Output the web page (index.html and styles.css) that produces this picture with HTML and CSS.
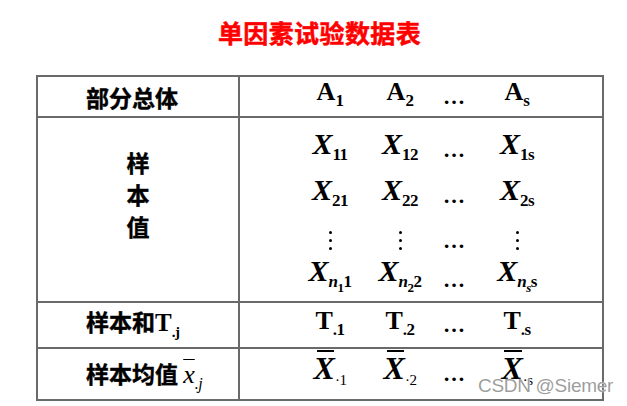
FILE: index.html
```html
<!DOCTYPE html>
<html lang="zh">
<head>
<meta charset="utf-8">
<title>单因素试验数据表</title>
<link rel="stylesheet" href="styles.css">
</head>
<body>
<div class="page">
  <h1 class="title">单因素试验数据表</h1>
  <table class="data">
    <tr class="r-head">
      <th class="lab">部分总体</th>
      <td class="vals">
        <div class="grid one">
          <span class="m">A<span class="sb">1</span></span>
          <span class="m">A<span class="sb">2</span></span>
          <span class="m dots">…</span>
          <span class="m">A<span class="sb it">s</span></span>
        </div>
      </td>
    </tr>
    <tr class="r-sample">
      <th class="lab center">
        <div class="vert"><span>样</span><span>本</span><span>值</span></div>
      </th>
      <td class="vals">
        <div class="grid four">
          <span class="m"><span class="x">X</span><span class="sb">11</span></span>
          <span class="m"><span class="x">X</span><span class="sb">12</span></span>
          <span class="m dots">…</span>
          <span class="m"><span class="x">X</span><span class="sb">1s</span></span>

          <span class="m"><span class="x">X</span><span class="sb">21</span></span>
          <span class="m"><span class="x">X</span><span class="sb">22</span></span>
          <span class="m dots">…</span>
          <span class="m"><span class="x">X</span><span class="sb">2s</span></span>

          <span class="vd"><i></i><i></i><i></i></span>
          <span class="vd"><i></i><i></i><i></i></span>
          <span class="m dots">…</span>
          <span class="vd"><i></i><i></i><i></i></span>

          <span class="m"><span class="x">X</span><span class="sb"><span class="it">n</span><span class="ssb">1</span>1</span></span>
          <span class="m"><span class="x">X</span><span class="sb"><span class="it">n</span><span class="ssb">2</span>2</span></span>
          <span class="m dots">…</span>
          <span class="m"><span class="x">X</span><span class="sb"><span class="it">n</span><span class="ssb it">s</span>s</span></span>
        </div>
      </td>
    </tr>
    <tr class="r-sum">
      <th class="lab">样本和<span class="m t">T<span class="sb">.j</span></span></th>
      <td class="vals">
        <div class="grid one">
          <span class="m">T<span class="sb">.1</span></span>
          <span class="m">T<span class="sb">.2</span></span>
          <span class="m dots">…</span>
          <span class="m">T<span class="sb">.s</span></span>
        </div>
      </td>
    </tr>
    <tr class="r-mean">
      <th class="lab">样本均值 <span class="xbar"><span class="ov">x</span><span class="sb">.j</span></span></th>
      <td class="vals">
        <div class="grid one">
          <span class="m big"><span class="x bar">X</span><span class="sb thin">·1</span></span>
          <span class="m big"><span class="x bar">X</span><span class="sb thin">·2</span></span>
          <span class="m dots">…</span>
          <span class="m big"><span class="x bar">X</span><span class="sb thin">·s</span></span>
        </div>
      </td>
    </tr>
  </table>
  <div class="wm">CSDN @Siemer</div>
</div>
</body>
</html>
```

FILE: styles.css
```css
html, body {
  margin: 0;
  padding: 0;
  background: #ffffff;
}

.page {
  position: relative;
  width: 627px;
  height: 406px;
  overflow: hidden;
  font-family: "Noto Sans CJK SC", "Noto Sans", sans-serif;
  color: #000;
}

.title {
  margin: 0;
  box-sizing: border-box;
  height: 75px;
  padding: 14px 0 0 12px;
  line-height: 36px;
  text-align: center;
  font-size: 25px;
  font-weight: 700;
  color: #ff0000;
  letter-spacing: 0.4px;
  -webkit-text-stroke: 0.5px #ff0000;
}

.data {
  border-collapse: collapse;
  margin-left: 36px;
  width: 568px;
}

.data th,
.data td {
  border: 2px solid #6a6a6a;
  padding: 0;
  vertical-align: middle;
}

.lab {
  width: 202px;
  box-sizing: border-box;
  text-align: left;
  padding-left: 48px !important;
  font-size: 23px;
  font-weight: 700;
  white-space: nowrap;
}

.lab.center {
  text-align: center;
  padding-left: 0 !important;
}

.lab,
.vert {
  -webkit-text-stroke: 0.4px #000;
}

.lab .m,
.lab .xbar {
  -webkit-text-stroke: 0;
}

.r-head { height: 37px; }
.r-sample { height: 185px; }
.r-sum { height: 46px; }
.r-mean { height: 52px; }

.vert {
  display: flex;
  flex-direction: column;
  align-items: center;
  gap: 6px;
  font-size: 23px;
  line-height: 26px;
  margin-top: -32px;
}

.grid {
  display: grid;
  grid-template-columns: 70px 70px 38px 88px;
  padding-left: 55px;
  justify-items: center;
  align-items: center;
}

.grid.four {
  grid-template-rows: 46px 46px 44px 34px;
  padding-top: 4px;
}

.m {
  font-family: "Liberation Serif", "Times New Roman", serif;
  font-weight: 700;
  font-size: 26px;
  line-height: 30px;
  white-space: nowrap;
}

.x {
  font-style: italic;
  font-size: 30px;
}

.m.big .x { font-size: 32px; }

.it { font-style: italic; }

.sb {
  font-size: 17px;
  vertical-align: -6px;
  font-style: normal;
  letter-spacing: -0.5px;
}

.ssb {
  font-size: 13px;
  vertical-align: -5px;
}

.sb.thin {
  font-weight: 400;
  font-size: 15px;
  vertical-align: -6px;
}

.bar {
  position: relative;
  display: inline-block;
}

.bar::before {
  content: "";
  position: absolute;
  left: 3px;
  right: 1px;
  top: -3px;
  height: 2px;
  background: #000;
}

.ov {
  text-decoration: overline;
  text-decoration-thickness: 1px;
}

.dots {
  font-size: 22px;
  letter-spacing: 0;
}

.vd {
  display: inline-flex;
  flex-direction: column;
  gap: 5px;
}

.vd i {
  display: block;
  width: 3px;
  height: 3px;
  border-radius: 50%;
  background: #000;
}

.lab .t {
  font-size: 25px;
}

.lab .t .sb {
  font-size: 15px;
}

.xbar {
  font-family: "Liberation Serif", "Times New Roman", serif;
  font-style: italic;
  font-weight: 400;
  font-size: 26px;
}

.xbar .sb {
  font-style: italic;
  font-size: 16px;
}

.wm {
  position: absolute;
  left: 478px;
  top: 375px;
  font-family: "Liberation Sans", Arial, sans-serif;
  font-size: 19px;
  letter-spacing: -0.3px;
  color: rgba(140, 140, 140, 0.85);
  text-shadow: 0 0 1px #fff, 0 0 1px #fff;
}
```
